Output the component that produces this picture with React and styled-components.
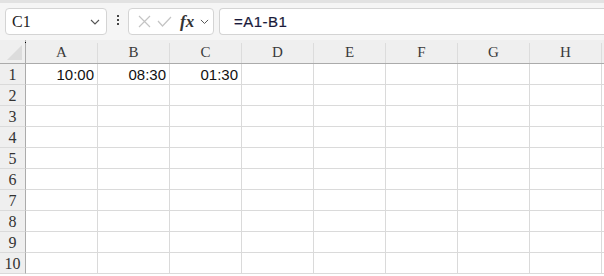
import React from 'react'
import styled, { createGlobalStyle } from 'styled-components'

const Global = createGlobalStyle`
  body {
    margin: 0;
    background: #ffffff;
    font-family: "Liberation Sans", Arial, sans-serif;
  }
`

const Page = styled.div`
  width: 604px;
  height: 276px;
  overflow: hidden;
  background: #ffffff;
`

const Toolbar = styled.div`
  height: 40px;
  box-sizing: border-box;
  display: flex;
  align-items: flex-start;
  padding: 5px 0 0 5px;
  background: #f5f5f5;
  border-top: 3px solid #e2e2e2;
`

const Box = styled.div`
  height: 27px;
  box-sizing: border-box;
  border: 1px solid #d4d4d4;
  border-radius: 4px;
  background: #ffffff;
  display: flex;
  align-items: center;
`

const NameBox = styled(Box)`
  width: 102px;
  padding: 0 6px 0 6px;
  justify-content: space-between;
  font-family: "Liberation Serif", serif;
  font-size: 16px;
  color: #222;
`

const Dots = styled.div`
  width: 21px;
  display: flex;
  flex-direction: column;
  align-items: center;
  gap: 2px;
  padding-top: 7px;
  span {
    width: 2px;
    height: 2px;
    background: #444;
  }
`

const FxBox = styled(Box)`
  width: 86px;
  padding: 0 0 0 9px;
  gap: 6px;
`

const Fx = styled.span`
  font-family: "Liberation Serif", serif;
  font-style: italic;
  font-weight: bold;
  font-size: 17px;
  color: #333;
  margin-left: 2px;
`

const FormulaBox = styled(Box)`
  flex: 1;
  margin-left: 5px;
  border-right: none;
  border-radius: 4px 0 0 4px;
  padding-left: 14px;
  font-size: 15px;
  color: #1a1a3a;
  letter-spacing: 0.5px;
  -webkit-text-stroke: 0.2px #1a1a3a;
`

const Grid = styled.div`
  display: grid;
  grid-template-columns: 26px repeat(9, 72px);
  grid-template-rows: 24px repeat(10, 21px);
`

const Corner = styled.div`
  position: relative;
  background: #efefef;
  border-right: 1px solid #ababab;
  border-bottom: 1px solid #ababab;
  &::before {
    content: '';
    position: absolute;
    right: -1px;
    top: 2px;
    width: 1px;
    height: 1px;
    background: #000;
  }
  &::after {
    content: '';
    position: absolute;
    right: 3px;
    bottom: 3px;
    width: 0;
    height: 0;
    border-left: 15px solid transparent;
    border-bottom: 15px solid #dcdcdc;
  }
`

const ColHead = styled.div`
  position: relative;
  background: #efefef;
  border-bottom: 1px solid #ababab;
  display: flex;
  align-items: flex-end;
  justify-content: center;
  padding: 0 1px 2px 0;
  font-family: "Liberation Serif", serif;
  font-size: 15px;
  color: #3a3a3a;
  &::after {
    content: '';
    position: absolute;
    right: 0;
    top: 3px;
    bottom: 0;
    width: 1px;
    background: ${p => (p.$last ? 'transparent' : '#dcdcdc')};
  }
`

const RowHead = styled.div`
  background: #efefef;
  border-right: 1px solid #ababab;
  border-bottom: 1px solid #dadada;
  display: flex;
  align-items: center;
  justify-content: center;
  font-family: "Liberation Serif", serif;
  font-size: 16px;
  color: #333;
  padding-top: 1px;
`

const Cell = styled.div`
  border-right: 1px solid #dadada;
  border-bottom: 1px solid #dadada;
  display: flex;
  align-items: center;
  justify-content: flex-end;
  padding: 1px 3px 0 0;
  font-size: 15px;
  color: #111;
`

const cols = ['A', 'B', 'C', 'D', 'E', 'F', 'G', 'H', 'I']
const data = { A1: '10:00', B1: '08:30', C1: '01:30' }

const Chevron = ({ size = 10 }) => (
  <svg width={size} height={size * 0.6} viewBox="0 0 10 6" fill="none" stroke="#555" strokeWidth="1.1">
    <path d="M1 1 L5 5 L9 1" />
  </svg>
)

export default function App() {
  return (
    <Page>
      <Global />
      <Toolbar>
        <NameBox>
          <span>C1</span>
          <Chevron />
        </NameBox>
        <Dots>
          <span />
          <span />
          <span />
        </Dots>
        <FxBox>
          <svg width="13" height="13" viewBox="0 0 13 13" stroke="#c4c4c4" strokeWidth="1.2">
            <path d="M1 1 L12 12 M12 1 L1 12" />
          </svg>
          <svg width="15" height="11" viewBox="0 0 15 11" fill="none" stroke="#c4c4c4" strokeWidth="1.2">
            <path d="M1 5 L5.5 10 L14 1" />
          </svg>
          <Fx>fx</Fx>
          <Chevron size={9} />
        </FxBox>
        <FormulaBox>=A1-B1</FormulaBox>
      </Toolbar>
      <Grid>
        <Corner />
        {cols.map((c, i) => (
          <ColHead key={c} $last={i === cols.length - 1}>{i < 8 ? c : ''}</ColHead>
        ))}
        {Array.from({ length: 10 }, (_, r) => (
          <React.Fragment key={r}>
            <RowHead>{r + 1}</RowHead>
            {cols.map(c => (
              <Cell key={c}>{data[c + (r + 1)] || ''}</Cell>
            ))}
          </React.Fragment>
        ))}
      </Grid>
    </Page>
  )
}
